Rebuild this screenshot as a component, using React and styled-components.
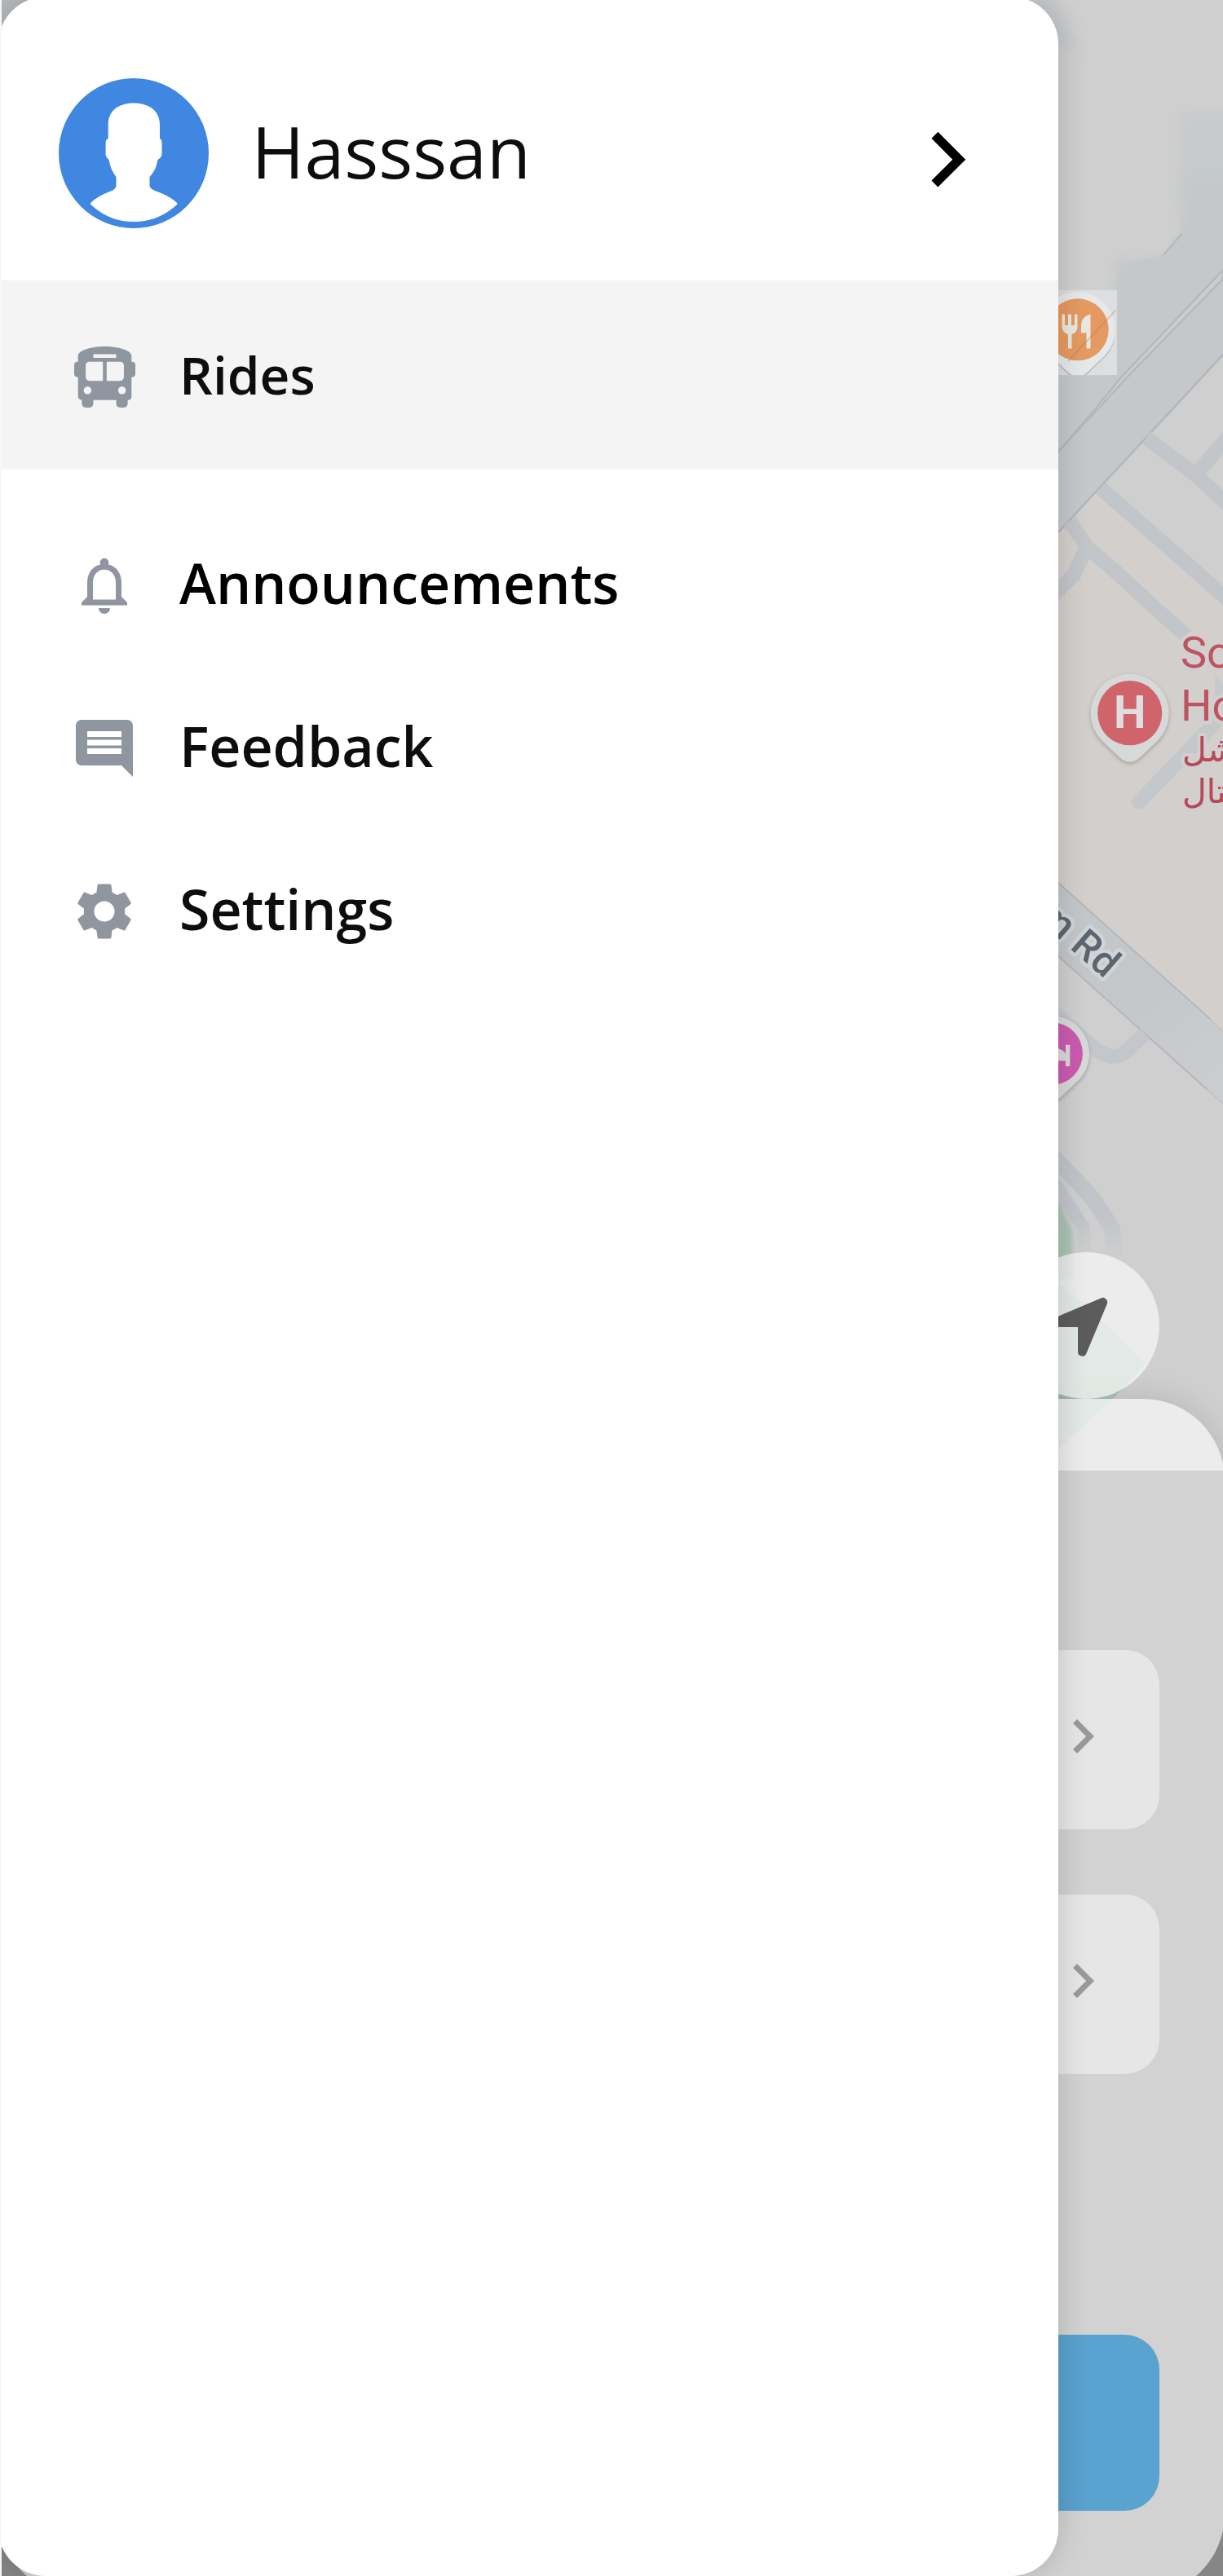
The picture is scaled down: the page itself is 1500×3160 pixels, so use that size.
import React from "react";
import styled, { createGlobalStyle } from "styled-components";
import { FaBusAlt } from "react-icons/fa";
import {
  MdChevronRight,
  MdComment,
  MdNotificationsNone,
  MdSettings,
} from "react-icons/md";

const GlobalStyle = createGlobalStyle`
  * { box-sizing: border-box; }
  body { margin: 0; background: #868686; }
`;

const Screen = styled.main`
  position: relative;
  width: 1500px;
  height: 3160px;
  overflow: hidden;
  background: #868686;
  font-family: "Open Sans", "Noto Sans", sans-serif;
`;

const Backdrop = styled.div`
  display: flex;
  flex-direction: column;
  width: 1504px;
  height: 3184px;
  margin-left: -2px;
  overflow: hidden;
  background: #d2d2d2;
  border-radius: 0 0 100px 100px;
`;

const MapArea = styled.section`
  position: relative;
  flex: none;
  height: 1804px;
  overflow: hidden;
  background: #cfcfcf;
`;

const MapDrawing = styled.svg`
  display: block;
  width: 1500px;
  height: 1804px;
  margin-left: 2px;
`;

const LocateButton = styled.button`
  position: absolute;
  right: 80px;
  bottom: 88px;
  width: 180px;
  height: 180px;
  padding: 0;
  border: 0;
  border-radius: 50%;
  background: rgba(244, 244, 244, 0.77);

  svg {
    display: block;
  }
`;

const SheetTop = styled.div`
  position: absolute;
  left: 0;
  right: 0;
  bottom: -12px;
  height: 100px;
  border-radius: 100px 100px 0 0;
  background: rgba(245, 245, 245, 0.77);
  box-shadow: 0 0 40px rgba(0, 0, 0, 0.13);
`;

const Sheet = styled.section`
  display: flex;
  flex-direction: column;
  gap: 80px;
  padding: 220px 80px 0;
`;

const OptionCard = styled.div`
  display: flex;
  align-items: center;
  justify-content: flex-end;
  height: 220px;
  padding: 0 52px 8px 0;
  border-radius: 42px;
  background: #e6e6e6;
  color: #9a9a9a;
  font-size: 84px;
`;

const PrimaryButton = styled.div`
  height: 216px;
  margin-top: 240px;
  border-radius: 43px;
  background: #5aa2cf;
`;

const Drawer = styled.aside`
  position: absolute;
  top: -4px;
  left: -2px;
  width: 1300px;
  height: 3164px;
  overflow: hidden;
  border-radius: 58px;
  background: #fff;
`;

const DrawerShadow = styled.div`
  position: absolute;
  top: -4px;
  left: -2px;
  width: 1300px;
  height: 3164px;
  border-radius: 58px;
  box-shadow: 0 0 38px rgba(0, 0, 0, 0.17);
`;

const EdgeStrip = styled.div`
  position: absolute;
  inset: 0 auto 0 0;
  width: 2px;
  background: #f8f8f8;
`;

const Profile = styled.header`
  display: flex;
  align-items: center;
  height: 348px;
  padding: 36px 68.5px 0 73.5px;
`;

const Avatar = styled.svg`
  flex: none;
  width: 184px;
  height: 184px;
`;

const Name = styled.h1`
  flex: 1;
  margin: 0 0 0 53px;
  padding-bottom: 6px;
  color: #0d0d0d;
  font-size: 88px;
  font-weight: 400;
  line-height: 120px;
`;

const ProfileArrow = styled(MdChevronRight)`
  flex: none;
  width: 135.4px;
  height: 135.4px;
  margin-top: 16px;
  color: #000;
`;

const Menu = styled.nav`
  display: flex;
  flex-direction: column;
`;

const MenuItem = styled.a`
  display: flex;
  align-items: center;
  height: ${(p) => (p.$active ? 232 : 200)}px;
  margin-bottom: ${(p) => (p.$active ? 42 : 0)}px;
  padding-left: 88px;
  background: ${(p) => (p.$active ? "#f4f4f4" : "transparent")};
`;

const MenuIcon = styled.span`
  display: flex;
  align-items: center;
  justify-content: center;
  width: 84px;
  height: 84px;
  margin-top: ${(p) => p.$shift || 0}px;
  color: #9096a0;
  font-size: ${(p) => p.$size || 84}px;
`;

const MenuLabel = styled.span`
  margin-left: 50px;
  padding-bottom: ${(p) => p.$lift}px;
  color: ${(p) => p.$color || "#0d0d0d"};
  font-size: ${(p) => p.$size || 68}px;
  font-weight: 600;
  line-height: 94px;
`;

const MapLabel = styled.text`
  font-family: Roboto, sans-serif;
  font-size: ${(p) => p.$size}px;
  font-weight: ${(p) => p.$weight || 400};
  fill: ${(p) => p.$color};
  stroke: ${(p) => p.$halo || "none"};
  stroke-width: ${(p) => (p.$halo ? 9 : 0)}px;
  stroke-linejoin: round;
  paint-order: stroke;
`;

const UrduLabel = styled.text`
  font-family: "DejaVu Sans", sans-serif;
  font-size: 41px;
  direction: rtl;
  text-anchor: end;
  fill: #b9475a;
  stroke: #d1d0cf;
  stroke-width: 8px;
  paint-order: stroke;
`;

const PIN = "M-34 34A48 48 0 1 1 34 34L12 55Q0 65-12 55Z";

function Pin({ x, y, color, scale = 1, children }) {
  return (
    <g transform={`translate(${x} ${y}) scale(${scale})`}>
      <path d={PIN} fill="#777" opacity=".55" filter="url(#soft)" transform="translate(0 2)" />
      <path d={PIN} fill="#d7d8d8" />
      <circle r="39.6" fill={color} />
      {children}
    </g>
  );
}

function CityMap() {
  return (
    <MapDrawing viewBox="0 0 1500 1804">
      <defs>
        <filter id="soft" x="-30%" y="-30%" width="160%" height="160%">
          <feGaussianBlur stdDeviation="2.5" />
        </filter>
        <filter id="fade" x="-30%" y="-30%" width="160%" height="160%">
          <feGaussianBlur stdDeviation="7" />
        </filter>
        <linearGradient id="road" gradientUnits="userSpaceOnUse" x1="1400" y1="1200" x2="1490" y2="1320">
          <stop offset="0" stopColor="#c3c7ca" />
          <stop offset="1" stopColor="#cbcccf" />
        </linearGradient>
        <linearGradient id="lane" gradientUnits="userSpaceOnUse" x1="0" y1="1495" x2="0" y2="1550">
          <stop offset="0" stopColor="#c1c4c9" />
          <stop offset="1" stopColor="#c5c8cb" stopOpacity="0" />
        </linearGradient>
        <linearGradient id="avenue" gradientUnits="userSpaceOnUse" x1="0" y1="130" x2="0" y2="250">
          <stop offset="0" stopColor="#c8cccf" />
          <stop offset="1" stopColor="#c4c8cb" />
        </linearGradient>
        <clipPath id="foodTile">
          <rect x="1270" y="356" width="100" height="104" />
        </clipPath>
      </defs>
      <rect width="1500" height="1804" fill="#cfcfcf" />

      <path d="M0 0H40L0 60Z" fill="#b5babd" />
      <path d="M1260-20H1290L1325 62H1280Z" fill="#c7c9cc" filter="url(#fade)" />
      <path d="M1530 134H1447V285L1427 316Q1400 322 1368 318L1362 480 1298 550 1270 672H1298L1530 425Z" fill="url(#avenue)" filter="url(#fade)" />
      <path d="M1450 286L1428 312L1376 325L1362 460H1298V653L1500 435V240H1470Z" fill="#c4c8cb" filter="url(#soft)" />
      <path d="M1345 260H1442V285L1426 310Q1390 312 1345 295Z" fill="#cfcfcf" filter="url(#soft)" />
      <path d="M1450 286L1427 313" stroke="#b5b8bb" strokeWidth="2" fill="none" />
      <path d="M1500 331L1375 463L1342 503L1298 554L1350 498L1385 460L1500 342Z" fill="#cacdce" stroke="#b3b7ba" strokeWidth="2.2" />

      <path d="M1298 653L1349 598L1500 733V1267L1298 1083Z" fill="#d3cfcc" />
      <path d="M1404 537L1500 434V733L1349 598Z" fill="#cfcfcf" />
      <path d="M1500 435L1298 653" stroke="#b2b6ba" strokeWidth="2.5" />
      <g fill="none" stroke="#c2c6ca" strokeWidth="18">
        <path d="M1406 537L1468 584L1508 621M1468 581L1506 536" />
        <path d="M1350 599L1460 695L1510 740" />
        <path d="M1312 639L1333 671L1368 701L1420 749L1455 780" />
        <path d="M1334 668L1317 705L1290 732" />
        <path d="M1397 984L1490 887" strokeLinecap="round" stroke="#c5c8cb" />
      </g>
      <path d="M1490 827L1500 838V870L1490 880Z" fill="#c7cacd" />

      <path d="M1298 1083L1500 1267V1354L1298 1173Z" fill="url(#road)" />
      <path d="M1298 1083L1484 1250M1298 1173L1480 1336" stroke="#b3b7bb" strokeWidth="2" fill="none" />
      <path d="M1484 1250L1500 1266M1480 1336L1500 1354" stroke="#bfc1c4" strokeWidth="1.5" fill="none" />
      <path d="M1290 1239L1340 1284Q1364 1305 1382 1289L1404 1268" fill="none" stroke="#c3c7cb" strokeWidth="18" />
      <MapLabel
        $size={49}
        $weight={500}
        $color="#5b6670"
        $halo="#d0d4d6"
        textAnchor="end"
        transform="translate(1355 1201) rotate(41)"
      >
        m Rd
      </MapLabel>

      <path d="M1270 1440L1300 1476L1315 1510L1316 1570H1270Z" fill="#a9c3b3" filter="url(#soft)" />
      <g fill="none" stroke="url(#lane)" strokeWidth="20">
        <path d="M1290 1446L1312 1480L1329 1507L1331 1550" strokeWidth="16" />
        <path d="M1285 1412L1322 1450L1340 1470L1364 1507L1367 1550" />
      </g>
      <path d="M1280 1560L1333 1602L1405 1672L1368 1713L1298 1778H1270Z" fill="#a9c4b4" />

      <g clipPath="url(#foodTile)">
        <rect x="1270" y="356" width="100" height="104" fill="#dcdedf" />
        <g transform="translate(1321.7 404.3) scale(.96)">
          <path d={PIN} fill="#b5b8ba" transform="translate(0 2)" />
          <path d={PIN} fill="#e6e9ea" />
          <circle r="39.6" fill="#e59a61" />
        </g>
        <path
          d="M1302.5 385.5V400Q1302.5 408 1310 410V427.5H1314.5V410Q1321.5 408 1321.5 400V385.5H1318V399H1314V385.5H1310V399H1306V385.5ZM1337.5 385.5Q1326 388 1326 400V408.5H1332.5V427.5H1337.5Z"
          fill="#e7e8e0"
        />
        <path d="M1310 443L1368 381" stroke="#a77854" strokeWidth="1.5" opacity=".4" />
      </g>

      <Pin x={1385.7} y={874.7} color="#d0646b">
        <MapLabel $size={56} $weight={700} $color="#dedede" textAnchor="middle" y="18.5">
          H
        </MapLabel>
      </Pin>
      <MapLabel $size={54} $color="#be5361" $halo="#d2d0ce" x="1448" y="819">
        So
      </MapLabel>
      <MapLabel $size={54} $color="#be5361" $halo="#d2d0ce" x="1448" y="884">
        Ho
      </MapLabel>
      <UrduLabel x="1450" y="934">سوشل</UrduLabel>
      <UrduLabel x="1450" y="985">ہسپتال</UrduLabel>

      <Pin x={1289.5} y={1292.5} color="#cb5bb0" scale={0.97}>
        <path d="M-20-6H0Q12-9 18 0V-11H23.5V16H18V9H-20Z" fill="#d9d9d9" />
      </Pin>
    </MapDrawing>
  );
}

const items = [
  { label: "Announcements", icon: <MdNotificationsNone />, color: "#000" },
  { label: "Feedback", icon: <MdComment /> },
  { label: "Settings", icon: <MdSettings /> },
];

export default function App() {
  return (
    <Screen>
      <GlobalStyle />
      <Backdrop>
        <MapArea>
          <CityMap />
          <SheetTop />
          <LocateButton aria-label="Locate me">
            <svg width="180" height="180" viewBox="1242 1536 180 180">
              <path
                d="M1322 1628V1658A5.4 5.4 0 0 0 1332.5 1660L1357.6 1600A5.6 5.6 0 0 0 1350.3 1592.4L1290 1618A5.4 5.4 0 0 0 1292 1628Z"
                fill="#5b5c5b"
              />
            </svg>
          </LocateButton>
        </MapArea>
        <Sheet>
          <OptionCard>
            <MdChevronRight />
          </OptionCard>
          <OptionCard>
            <MdChevronRight />
          </OptionCard>
          <PrimaryButton />
        </Sheet>
      </Backdrop>
      <DrawerShadow />
      <Drawer>
        <Profile>
          <Avatar viewBox="0 0 184 184">
            <circle cx="92" cy="92" r="92" fill="#4087e1" />
            <path
              d="M92 30.5C72 30.5 60.7 41 60.7 57V74Q57.5 75 57.6 80V94Q58 97 61.5 100C63.5 110 66 115 70.5 121V131Q70.5 135 66 137.5C55 142 44 147 38.5 154Q61 176 92 176T146 154C140 147 129 142 117 137.5Q111.5 135 111.5 131V121C117 115 119.5 110 121.5 100Q126 97 126.5 94V80Q126.5 75 124 74V57C124 41 112 30.5 92 30.5Z"
              fill="#fff"
            />
          </Avatar>
          <Name>Hasssan</Name>
          <ProfileArrow />
        </Profile>
        <Menu>
          <MenuItem $active>
            <MenuIcon $size={75} $shift={4}>
              <FaBusAlt />
            </MenuIcon>
            <MenuLabel $size={64} $lift={1}>
              Rides
            </MenuLabel>
          </MenuItem>
          {items.map((item) => (
            <MenuItem key={item.label}>
              <MenuIcon>{item.icon}</MenuIcon>
              <MenuLabel $color={item.color} $lift={7}>
                {item.label}
              </MenuLabel>
            </MenuItem>
          ))}
        </Menu>
      </Drawer>
      <EdgeStrip />
    </Screen>
  );
}
